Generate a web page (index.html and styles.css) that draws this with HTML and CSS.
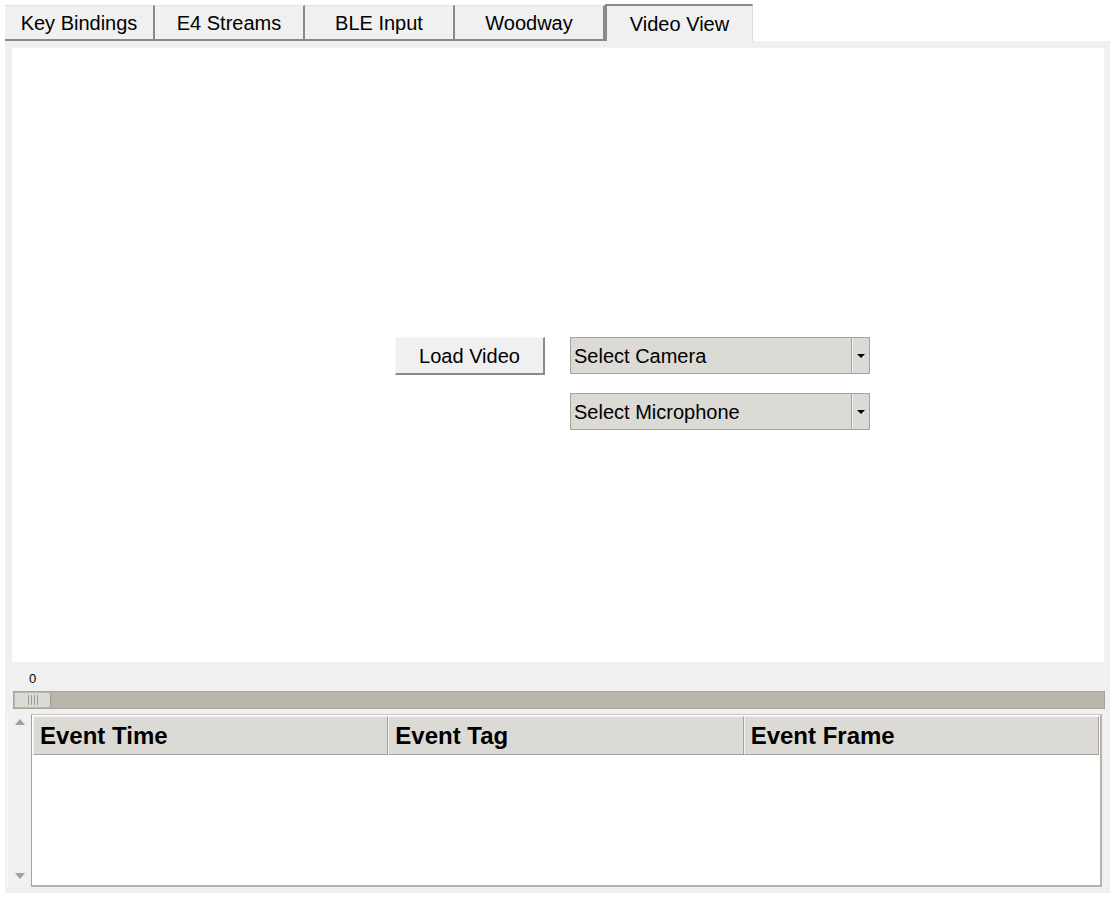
FILE: index.html
```html
<!DOCTYPE html>
<html>
<head>
<meta charset="utf-8">
<link rel="stylesheet" href="styles.css">
</head>
<body>
<div class="app">
  <div class="tabs">
    <div class="tab">Key Bindings</div>
    <div class="tab">E4 Streams</div>
    <div class="tab">BLE Input</div>
    <div class="tab">Woodway</div>
    <div class="tab active">Video View</div>
  </div>
  <div class="panel">
    <div class="view">
      <div class="controls">
        <button class="btn">Load Video</button>
        <div class="combos">
          <div class="combo"><span class="combo-text">Select Camera</span><span class="combo-arrow"><span class="tri"></span></span></div>
          <div class="combo"><span class="combo-text">Select Microphone</span><span class="combo-arrow"><span class="tri"></span></span></div>
        </div>
      </div>
    </div>
    <div class="slider">
      <div class="slider-label">0</div>
      <div class="track">
        <div class="thumb"><span class="grip"></span><span class="grip"></span><span class="grip"></span><span class="grip"></span></div>
      </div>
    </div>
    <div class="events">
      <div class="vscroll">
        <span class="up"></span>
        <span class="down"></span>
      </div>
      <div class="table">
        <div class="thead">
          <div class="th">Event Time</div>
          <div class="th">Event Tag</div>
          <div class="th">Event Frame</div>
        </div>
      </div>
    </div>
  </div>
</div>
</body>
</html>
```
FILE: styles.css
```css
* { box-sizing: border-box; }
html, body { margin: 0; padding: 0; background: #ffffff; }
body { font-family: "Liberation Sans", Arial, sans-serif; color: #000; }

.app {
  width: 1105px;
  margin-left: 5px;
  padding-top: 4px;
}

.tabs {
  display: flex;
  height: 37px;
  align-items: flex-end;
}
.tab {
  width: 150px;
  height: 36px;
  background: #f0f0f0;
  border-top: 1px solid #e4e4e4;
  border-right: 2px solid #8a8a8a;
  border-bottom: 2px solid #8a8a8a;
  font-size: 20px;
  display: flex;
  align-items: center;
  justify-content: center;
  padding-top: 1px;
}
.tab.active {
  width: 148px;
  height: 37px;
  border-top: 2px solid #8a8a8a;
  border-left: 2px solid #8a8a8a;
  border-right: 1px solid #dadada;
  border-bottom: none;
  padding-top: 2px;
}

.panel {
  background: #f0f0f0;
  padding: 7px 6px 6px 7px;
}

.view {
  background: #ffffff;
  height: 614px;
  padding-top: 289px;
  padding-left: 383px;
}
.controls {
  display: flex;
  align-items: flex-start;
  gap: 25px;
}
.btn {
  width: 150px;
  height: 38px;
  background: #f0f0f0;
  border: none;
  border-top: 1px solid #f8f8f8;
  border-left: 1px solid #f8f8f8;
  border-right: 2px solid #8a8a8a;
  border-bottom: 2px solid #8a8a8a;
  font-family: "Liberation Sans", Arial, sans-serif;
  font-size: 20px;
  color: #000;
  padding: 2px 0 0;
}
.combos {
  display: flex;
  flex-direction: column;
  gap: 19px;
}
.combo {
  width: 300px;
  height: 37px;
  background: #dcdad5;
  border: 1px solid #a5a29c;
  display: flex;
  align-items: stretch;
}
.combo-text {
  flex: 1;
  font-size: 20px;
  display: flex;
  align-items: center;
  padding-left: 3px;
  padding-top: 1px;
  border-right: 1px solid #a5a29c;
}
.combo-arrow {
  width: 17px;
  display: flex;
  align-items: center;
  justify-content: center;
  border-left: 1px solid #f2f1ee;
}
.tri {
  width: 0;
  height: 0;
  border-left: 4px solid transparent;
  border-right: 4px solid transparent;
  border-top: 4px solid #000;
}

.slider {
  padding-top: 10px;
  margin-left: 1px;
  margin-right: -1px;
}
.slider-label {
  font-size: 13px;
  height: 15px;
  line-height: 14px;
  padding-left: 16px;
  margin-bottom: 4px;
}
.track {
  height: 18px;
  background: #bab5ab;
  border: 1px solid #a9a49a;
  padding: 1px;
}
.thumb {
  width: 36px;
  height: 100%;
  background: #dcdad5;
  border-right: 1px solid #9e9a92;
  display: flex;
  justify-content: center;
  align-items: center;
  gap: 2px;
}
.grip {
  width: 1px;
  height: 10px;
  background: #9e9a92;
}

.events {
  display: flex;
  margin-top: 5px;
  margin-left: -5px;
  height: 173px;
}
.vscroll {
  width: 24px;
  border-left: 1px solid #fafafa;
  display: flex;
  flex-direction: column;
  justify-content: space-between;
  align-items: center;
  padding: 5px 0 8px;
}
.up {
  width: 0;
  height: 0;
  border-left: 5px solid transparent;
  border-right: 5px solid transparent;
  border-bottom: 6px solid #a0a0a0;
}
.down {
  width: 0;
  height: 0;
  border-left: 5px solid transparent;
  border-right: 5px solid transparent;
  border-top: 6px solid #a0a0a0;
}
.table {
  flex: 1;
  margin-right: 2px;
  background: #ffffff;
  border-left: 1px solid #a6a29a;
  border-top: 1px solid #c9c6c0;
  border-right: 2px solid #b7b3ab;
  border-bottom: 2px solid #b7b3ab;
  padding: 1px 1px 0 1px;
}
.thead {
  display: flex;
  height: 39px;
}
.th {
  flex: 1;
  background: #dcdad5;
  border: 1px solid #a5a29c;
  border-left-color: #f2f1ee;
  border-top-color: #f2f1ee;
  font-size: 24px;
  font-weight: bold;
  display: flex;
  align-items: center;
  padding-left: 6px;
  padding-top: 1px;
}
```
